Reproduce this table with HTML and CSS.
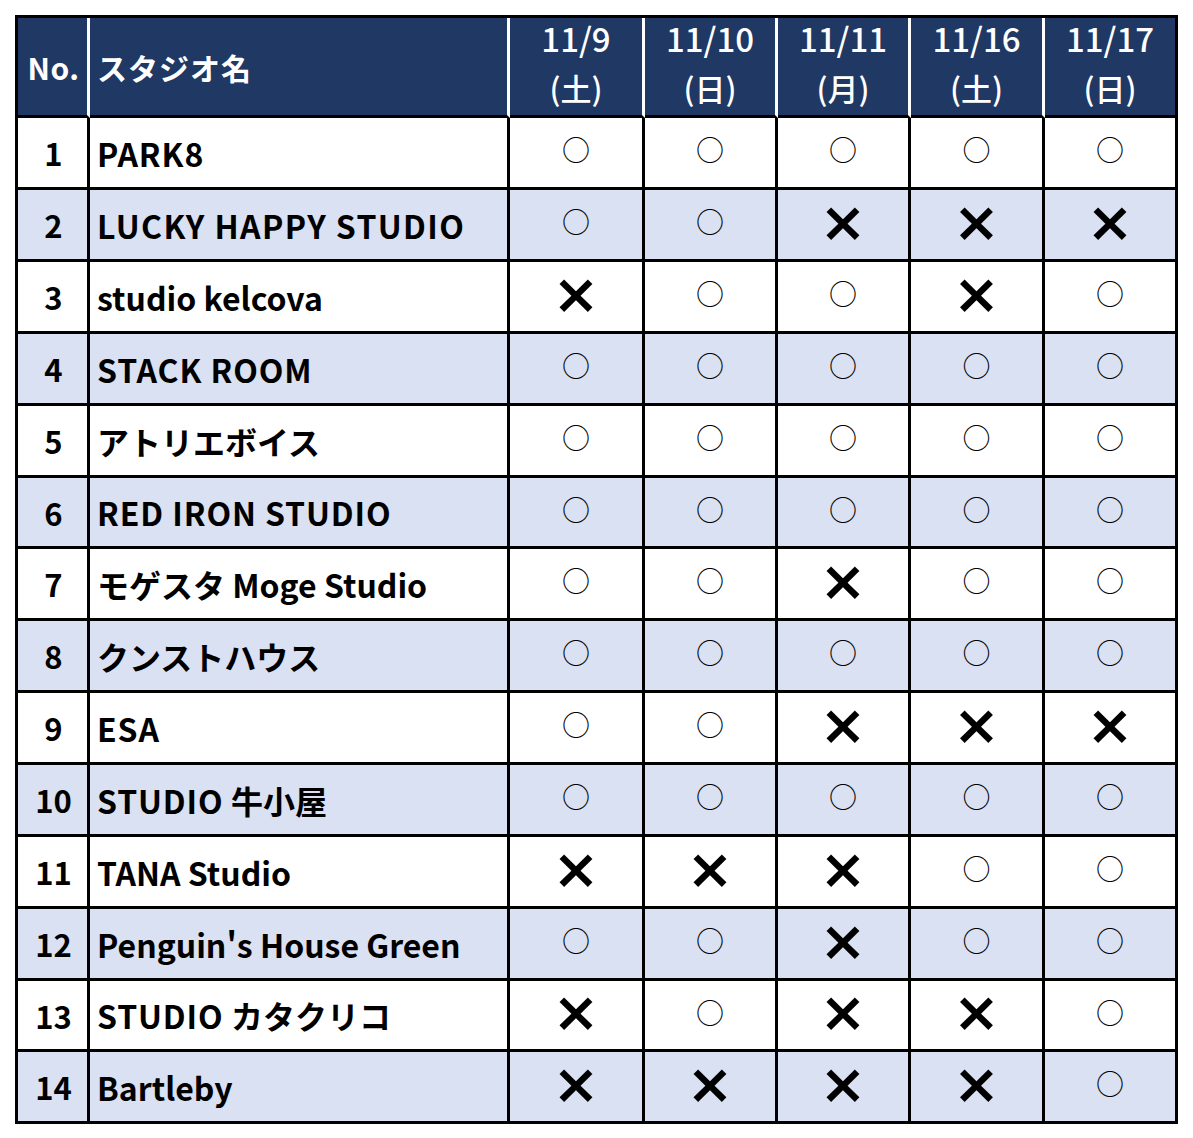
FILE: index.html
```html
<!DOCTYPE html>
<html lang="ja">
<head>
<meta charset="utf-8">
<title>スタジオ空き状況</title>
<link rel="stylesheet" href="styles.css">
</head>
<body>
<table class="sched">
  <thead>
    <tr>
      <th class="c-no">No.</th>
      <th class="c-name">スタジオ名</th>
      <th class="c-d1"><span class="d">11/9</span><span class="w">(土)</span></th>
      <th class="c-d2"><span class="d">11/10</span><span class="w">(日)</span></th>
      <th class="c-d3"><span class="d">11/11</span><span class="w">(月)</span></th>
      <th class="c-d4"><span class="d">11/16</span><span class="w">(土)</span></th>
      <th class="c-d5"><span class="d">11/17</span><span class="w">(日)</span></th>
    </tr>
  </thead>
  <tbody>
    <tr><td class="no">1</td><td class="name"><span class="caps">PARK8</span></td><td><span class="o">○</span></td><td><span class="o">○</span></td><td><span class="o">○</span></td><td><span class="o">○</span></td><td><span class="o">○</span></td></tr>
    <tr class="alt"><td class="no">2</td><td class="name"><span class="caps wide">LUCKY HAPPY STUDIO</span></td><td><span class="o">○</span></td><td><span class="o">○</span></td><td><span class="x">×</span></td><td><span class="x">×</span></td><td><span class="x">×</span></td></tr>
    <tr><td class="no">3</td><td class="name">studio kelcova</td><td><span class="x">×</span></td><td><span class="o">○</span></td><td><span class="o">○</span></td><td><span class="x">×</span></td><td><span class="o">○</span></td></tr>
    <tr class="alt"><td class="no">4</td><td class="name"><span class="caps">STACK ROOM</span></td><td><span class="o">○</span></td><td><span class="o">○</span></td><td><span class="o">○</span></td><td><span class="o">○</span></td><td><span class="o">○</span></td></tr>
    <tr><td class="no">5</td><td class="name">アトリエボイス</td><td><span class="o">○</span></td><td><span class="o">○</span></td><td><span class="o">○</span></td><td><span class="o">○</span></td><td><span class="o">○</span></td></tr>
    <tr class="alt short"><td class="no">6</td><td class="name"><span class="caps">RED IRON STUDIO</span></td><td><span class="o">○</span></td><td><span class="o">○</span></td><td><span class="o">○</span></td><td><span class="o">○</span></td><td><span class="o">○</span></td></tr>
    <tr><td class="no">7</td><td class="name">モゲスタ Moge Studio</td><td><span class="o">○</span></td><td><span class="o">○</span></td><td><span class="x">×</span></td><td><span class="o">○</span></td><td><span class="o">○</span></td></tr>
    <tr class="alt"><td class="no">8</td><td class="name">クンストハウス</td><td><span class="o">○</span></td><td><span class="o">○</span></td><td><span class="o">○</span></td><td><span class="o">○</span></td><td><span class="o">○</span></td></tr>
    <tr><td class="no">9</td><td class="name"><span class="caps">ESA</span></td><td><span class="o">○</span></td><td><span class="o">○</span></td><td><span class="x">×</span></td><td><span class="x">×</span></td><td><span class="x">×</span></td></tr>
    <tr class="alt"><td class="no">10</td><td class="name"><span class="caps">STUDIO</span> 牛小屋</td><td><span class="o">○</span></td><td><span class="o">○</span></td><td><span class="o">○</span></td><td><span class="o">○</span></td><td><span class="o">○</span></td></tr>
    <tr><td class="no">11</td><td class="name">TANA Studio</td><td><span class="x">×</span></td><td><span class="x">×</span></td><td><span class="x">×</span></td><td><span class="o">○</span></td><td><span class="o">○</span></td></tr>
    <tr class="alt"><td class="no">12</td><td class="name">Penguin's House Green</td><td><span class="o">○</span></td><td><span class="o">○</span></td><td><span class="x">×</span></td><td><span class="o">○</span></td><td><span class="o">○</span></td></tr>
    <tr class="short"><td class="no">13</td><td class="name"><span class="caps">STUDIO</span> カタクリコ</td><td><span class="x">×</span></td><td><span class="o">○</span></td><td><span class="x">×</span></td><td><span class="x">×</span></td><td><span class="o">○</span></td></tr>
    <tr class="alt"><td class="no">14</td><td class="name">Bartleby</td><td><span class="x">×</span></td><td><span class="x">×</span></td><td><span class="x">×</span></td><td><span class="x">×</span></td><td><span class="o">○</span></td></tr>
  </tbody>
</table>
</body>
</html>
```

FILE: styles.css
```css
html, body {
  margin: 0;
  padding: 0;
  background: #ffffff;
}

body {
  padding: 15px 0 0 15px;
  font-family: "Noto Sans CJK JP", "Noto Sans", sans-serif;
}

.sched {
  border-collapse: separate;
  border-spacing: 0;
  table-layout: fixed;
  width: 1163px;
  border-top: 3px solid #000;
  border-left: 3px solid #000;
}

.sched th,
.sched td {
  padding: 0;
  border-right: 3px solid #000;
  border-bottom: 3px solid #000;
  white-space: nowrap;
}

.c-no { width: 67px; }
.c-name { width: 410px; }
.c-d1 { width: 132px; }
.c-d2 { width: 130px; }
.c-d3 { width: 130px; }
.c-d4 { width: 131px; }
.c-d5 { width: 130px; }

.sched thead th {
  background: #203864;
  color: #ffffff;
  height: 97px;
  border-right-color: #ffffff;
  font-weight: 700;
  vertical-align: middle;
}

.sched thead th:last-child {
  border-right-color: #000;
}

.sched thead .c-no {
  font-size: 30px;
  text-align: center;
  padding-left: 2px;
  letter-spacing: 0.5px;
}

.sched thead .c-name {
  font-size: 30px;
  text-align: left;
  padding-left: 7px;
  letter-spacing: 1px;
}

.sched thead .d,
.sched thead .w {
  display: block;
  text-align: center;
  line-height: 48px;
  position: relative;
}

.sched thead .d {
  font-size: 33px;
  font-weight: 500;
  top: -5px;
}

.sched thead .w {
  font-size: 31px;
  font-weight: 500;
  top: -3px;
}

.sched tbody td {
  height: 69px;
  text-align: center;
  vertical-align: middle;
  color: #000;
  background: #ffffff;
}

.sched tbody tr.short td {
  height: 68px;
}

.sched tbody tr.alt td {
  background: #d9e1f2;
}

.sched tbody td.no {
  font-size: 31px;
  font-weight: 700;
  padding-left: 2px;
}

.sched tbody td.name {
  text-align: left;
  padding-left: 7px;
  font-size: 32px;
  font-weight: 700;
}

.caps {
  letter-spacing: 0.9px;
}

.caps.wide {
  letter-spacing: 1.4px;
}

.o {
  display: inline-block;
  font-size: 28px;
  font-weight: 400;
  line-height: 1;
  position: relative;
  top: -2px;
}

.x {
  display: inline-block;
  font-family: "DejaVu Sans", "Liberation Sans", sans-serif;
  font-size: 56px;
  font-weight: 700;
  line-height: 1;
  position: relative;
  top: -3px;
}
```
